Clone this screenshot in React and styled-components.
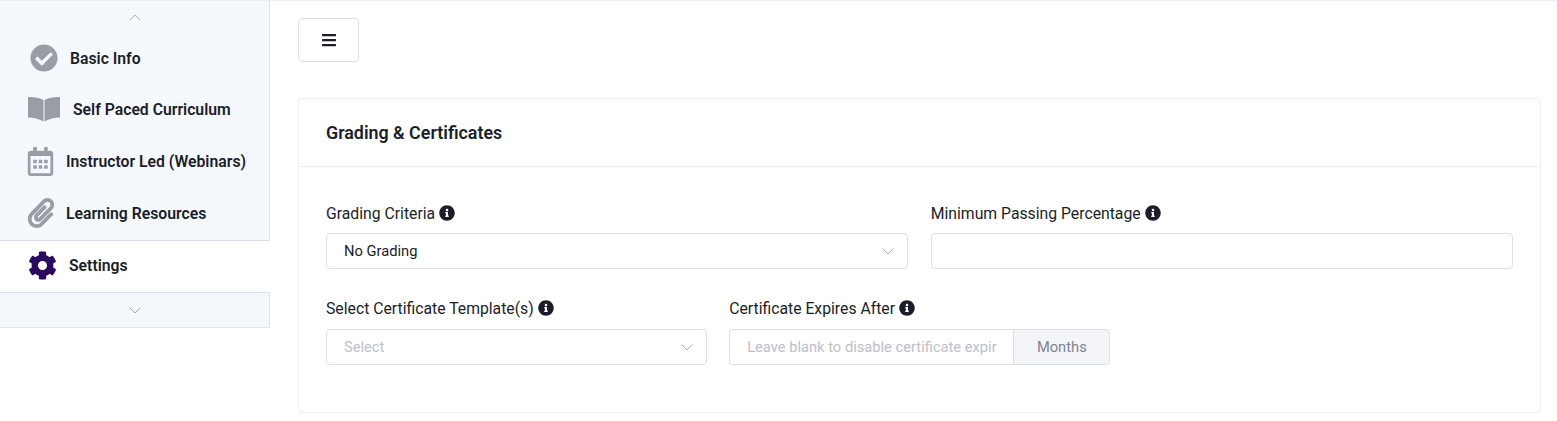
import React from "react";
import styled, { createGlobalStyle } from "styled-components";
import {
  FaCheckCircle,
  FaRegCalendarAlt,
  FaPaperclip,
  FaCog,
  FaInfoCircle,
  FaBars,
} from "react-icons/fa";

const GlobalStyle = createGlobalStyle`
  html, body {
    margin: 0;
    padding: 0;
    background: #fff;
    font-family: Roboto, "Liberation Sans", sans-serif;
    color: #1b1e28;
  }
  * {
    box-sizing: border-box;
  }
`;

function Chevron({ up }) {
  return (
    <svg width="12" height="7" viewBox="0 0 12 7" fill="none">
      <path
        d={up ? "M0.5 6.5L6 1L11.5 6.5" : "M0.5 0.5L6 6L11.5 0.5"}
        stroke={up ? "#aeb4bf" : "#a4aab5"}
        strokeWidth="1"
      />
    </svg>
  );
}

function BookIcon() {
  return (
    <svg viewBox="0 0 32 25" fill="currentColor">
      <path d="M0 .5C5 0 11 1 15.5 3.5V25C11 22.5 5 21 0 21Z" />
      <path d="M16.5 3.5C21 1 27 0 32 .5V21C27 21 21 22.5 16.5 25Z" />
    </svg>
  );
}

function Label({ children }) {
  return (
    <LabelRow>
      {children}
      <FaInfoCircle size={16} />
    </LabelRow>
  );
}

export default function App() {
  return (
    <Page>
      <GlobalStyle />
      <Sidebar>
        <Nav>
          <ArrowTop>
            <Chevron up />
          </ArrowTop>
          <NavItem $height={51} $top={1} $left={30} $gap={12} $iconSize={28}>
            <FaCheckCircle />
            Basic Info
          </NavItem>
          <NavItem $left={28} $gap={13} $iconSize={32}>
            <BookIcon />
            Self Paced Curriculum
          </NavItem>
          <NavItem $left={26} $gap={11} $iconSize={29}>
            <FaRegCalendarAlt />
            Instructor Led (Webinars)
          </NavItem>
          <NavItem $left={26} $gap={10} $iconSize={30}>
            <FaPaperclip />
            Learning Resources
          </NavItem>
          <NavItem $active $height={53} $left={28} $gap={12} $iconSize={29}>
            <FaCog />
            Settings
          </NavItem>
          <ArrowBottom>
            <Chevron />
          </ArrowBottom>
        </Nav>
      </Sidebar>
      <Main>
        <MenuButton>
          <FaBars size={16} />
        </MenuButton>
        <Card>
          <CardHeader>Grading &amp; Certificates</CardHeader>
          <CardBody>
            <Field $span={3}>
              <Label>Grading Criteria</Label>
              <SelectBox>
                No Grading
                <Chevron />
              </SelectBox>
            </Field>
            <Field $span={3}>
              <Label>Minimum Passing Percentage</Label>
              <Input />
            </Field>
            <Field $span={2}>
              <Label>Select Certificate Template(s)</Label>
              <SelectBox $placeholder>
                Select
                <Chevron />
              </SelectBox>
            </Field>
            <Field $span={2}>
              <Label>Certificate Expires After</Label>
              <InputGroup>
                <GroupInput placeholder="Leave blank to disable certificate expiry" />
                <Addon>Months</Addon>
              </InputGroup>
            </Field>
          </CardBody>
        </Card>
      </Main>
    </Page>
  );
}

const Page = styled.div`
  display: flex;
  height: 421px;
  overflow: hidden;
  border-top: 1px solid #e9f0f7;
`;

const Sidebar = styled.aside`
  width: 270px;
  flex-shrink: 0;
`;

const Nav = styled.nav`
  background: #f5f8fc;
  border-right: 1px solid #dfe6ee;
  border-bottom: 1px solid #dfe6ee;
`;

const ArrowTop = styled.div`
  height: 31px;
  padding-top: 1px;
  display: flex;
  align-items: center;
  justify-content: center;
`;

const ArrowBottom = styled.div`
  height: 34px;
  display: flex;
  align-items: center;
  justify-content: center;
`;

const NavItem = styled.div`
  height: ${(props) => props.$height || 52}px;
  display: flex;
  align-items: center;
  gap: ${(props) => props.$gap}px;
  padding-top: ${(props) => props.$top || 0}px;
  padding-left: ${(props) => props.$left}px;
  padding-bottom: ${(props) => (props.$active ? "2px" : "0")};
  font-size: 15.75px;
  font-weight: 600;
  color: #1b1e28;
  background: ${(props) => (props.$active ? "#fff" : "transparent")};
  border-top: ${(props) => (props.$active ? "1px solid #d5e0ea" : "none")};
  border-bottom: ${(props) => (props.$active ? "1px solid #d5e0ea" : "none")};
  margin-top: ${(props) => (props.$active ? "1px" : "0")};
  margin-right: ${(props) => (props.$active ? "-1px" : "0")};

  svg {
    width: ${(props) => props.$iconSize}px;
    height: ${(props) => props.$iconSize}px;
    color: ${(props) => (props.$active ? "#2a0a5e" : "#9a9ca6")};
    flex-shrink: 0;
  }
`;

const Main = styled.main`
  flex: 1;
  padding: 17px 16px 0 28px;
`;

const MenuButton = styled.button`
  width: 61px;
  height: 44px;
  display: flex;
  align-items: center;
  justify-content: center;
  background: #fff;
  border: 1px solid #dcdfe8;
  border-radius: 4px;
  color: #1b1e28;
  padding: 0;
`;

const Card = styled.section`
  margin-top: 36px;
  height: 315px;
  border: 1px solid #e9f0f7;
  border-radius: 4px;
`;

const CardHeader = styled.h2`
  margin: 0;
  height: 68px;
  display: flex;
  align-items: center;
  padding-left: 27px;
  font-size: 17.85px;
  font-weight: 600;
  border-bottom: 1px solid #e9f0f7;
`;

const CardBody = styled.div`
  display: grid;
  grid-template-columns: repeat(6, 1fr);
  column-gap: 22.5px;
  row-gap: 29px;
  padding: 36px 27px 0;
`;

const LabelRow = styled.label`
  display: flex;
  align-items: center;
  gap: 4px;
  height: 20px;
  margin-bottom: 10px;
  font-size: 15.75px;
  color: #1b1e28;

  svg {
    flex-shrink: 0;
  }
`;

const Field = styled.div`
  grid-column: span ${(props) => props.$span};
  min-width: 0;

  &:nth-child(n + 3) ${LabelRow} {
    margin-bottom: 11px;
  }
`;

const SelectBox = styled.div`
  height: 36px;
  display: flex;
  align-items: center;
  justify-content: space-between;
  padding: 0 13px 0 17px;
  border: 1px solid #dcdfe8;
  border-radius: 4px;
  font-size: 14.7px;
  color: ${(props) => (props.$placeholder ? "#bcc0ca" : "#1b1e28")};
`;

const Input = styled.input`
  display: block;
  width: 100%;
  height: 36px;
  border: 1px solid #dcdfe8;
  border-radius: 4px;
  outline: none;
`;

const InputGroup = styled.div`
  display: flex;
  height: 36px;
`;

const GroupInput = styled.input`
  flex: 1;
  min-width: 0;
  padding: 0 16px 0 17px;
  border: 1px solid #dcdfe8;
  border-right: none;
  border-radius: 4px 0 0 4px;
  outline: none;
  font-family: inherit;
  font-size: 14.7px;

  &::placeholder {
    color: #bcc0ca;
    opacity: 1;
  }
`;

const Addon = styled.div`
  width: 97px;
  display: flex;
  align-items: center;
  justify-content: center;
  padding-left: 1px;
  background: #f4f5f9;
  border: 1px solid #dcdfe8;
  border-radius: 0 4px 4px 0;
  font-size: 14.7px;
  color: #80838f;
`;
